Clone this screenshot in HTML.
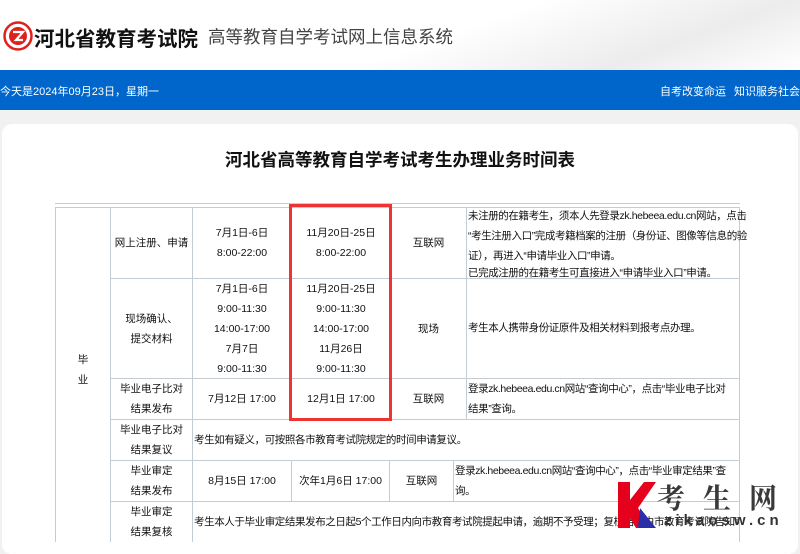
<!DOCTYPE html>
<html><head><meta charset="utf-8">
<style>
*{margin:0;padding:0;box-sizing:border-box}
body{width:800px;height:542px;overflow:hidden;position:relative;background:#f1f1f1;font-family:"Liberation Sans","Noto Sans CJK SC",sans-serif;}
.a{position:absolute;white-space:nowrap}
.hd{left:0;top:0;width:800px;height:70px;background:linear-gradient(160deg,#fff 0%,#fff 55%,#ececec 80%,#fff 100%)}
.bar{left:0;top:70px;width:800px;height:40px;background:#0066cc;color:#fff;font-size:11px}
.card{left:2px;top:124px;width:796px;height:430px;background:#fff;border-radius:10px}
.h{background:#c3ccd2;height:1px}
.v{background:#c3ccd2;width:1px}
.c{position:absolute;font-size:10.5px;color:#111;text-align:center;line-height:20px;display:flex;align-items:center;justify-content:center;flex-direction:column;white-space:nowrap}
.l{position:absolute;font-size:10.5px;color:#111;line-height:20px;white-space:nowrap;letter-spacing:-0.4px}
</style></head><body>
<div class="a hd"></div>
<svg class="a" style="left:3px;top:21px" width="30" height="30" viewBox="0 0 30 30"><circle cx="15" cy="15" r="13.5" fill="none" stroke="#e0201b" stroke-width="2.5"/><circle cx="15" cy="15" r="9" fill="#e0201b"/><path d="M10 11h10l-7 8h7" stroke="#fff" stroke-width="2.2" fill="none"/></svg>
<div class="a" style="left:34px;top:22px;font-size:20.5px;font-weight:bold;color:#111">河北省教育考试院</div>
<div class="a" style="left:208px;top:24px;font-size:17.5px;color:#444">高等教育自学考试网上信息系统</div>
<div class="a bar"><span class="a" style="left:0;top:13px">今天是2024年09月23日，星期一</span><span class="a" style="left:660px;top:13px">自考改变命运</span><span class="a" style="left:734px;top:13px">知识服务社会</span></div>
<div class="a card"></div>
<div class="a" style="left:0;width:800px;top:147px;text-align:center;font-size:17.5px;font-weight:bold;color:#111">河北省高等教育自学考试考生办理业务时间表</div>

<div class="a h" style="left:55px;top:203px;width:685px;background:#ccc"></div>
<div class="a h" style="left:55px;top:207px;width:685px"></div>
<div class="a v" style="left:55px;top:207px;height:335px"></div>
<div class="a v" style="left:110px;top:207px;height:335px"></div>
<div class="a v" style="left:192px;top:207px;height:335px"></div>
<div class="a v" style="left:739px;top:207px;height:335px"></div>
<div class="a v" style="left:291px;top:207px;height:213px"></div>
<div class="a v" style="left:390px;top:207px;height:213px"></div>
<div class="a v" style="left:466px;top:207px;height:213px"></div>
<div class="a v" style="left:291px;top:460px;height:41px"></div>
<div class="a v" style="left:389px;top:460px;height:41px"></div>
<div class="a v" style="left:453px;top:460px;height:41px"></div>
<div class="a h" style="left:110px;top:278px;width:630px"></div>
<div class="a h" style="left:110px;top:378px;width:630px"></div>
<div class="a h" style="left:110px;top:419px;width:630px"></div>
<div class="a h" style="left:110px;top:460px;width:630px"></div>
<div class="a h" style="left:110px;top:501px;width:630px"></div>

<div class="c" style="left:56px;top:350px;width:54px;line-height:20px">毕<br>业</div>
<div class="c" style="left:111px;top:208px;width:81px;height:70px">网上注册、申请</div>
<div class="c" style="left:193px;top:208px;width:98px;height:70px">7月1日-6日<br>8:00-22:00</div>
<div class="c" style="left:292px;top:208px;width:98px;height:70px">11月20日-25日<br>8:00-22:00</div>
<div class="c" style="left:391px;top:208px;width:75px;height:70px">互联网</div>
<div class="l" style="left:468px;top:206px">未注册的在籍考生，须本人先登录zk.hebeea.edu.cn网站，点击<br>“考生注册入口”完成考籍档案的注册（身份证、图像等信息的验<br>证），再进入“申请毕业入口”申请。<div style="line-height:14px">已完成注册的在籍考生可直接进入“申请毕业入口”申请。</div></div>

<div class="c" style="left:111px;top:279px;width:81px;height:99px">现场确认、<br>提交材料</div>
<div class="c" style="left:193px;top:279px;width:98px;height:99px">7月1日-6日<br>9:00-11:30<br>14:00-17:00<br>7月7日<br>9:00-11:30</div>
<div class="c" style="left:292px;top:279px;width:98px;height:99px">11月20日-25日<br>9:00-11:30<br>14:00-17:00<br>11月26日<br>9:00-11:30</div>
<div class="c" style="left:391px;top:279px;width:75px;height:99px">现场</div>
<div class="l" style="left:468px;top:318px">考生本人携带身份证原件及相关材料到报考点办理。</div>

<div class="c" style="left:111px;top:379px;width:81px;height:40px">毕业电子比对<br>结果发布</div>
<div class="c" style="left:193px;top:379px;width:98px;height:40px">7月12日 17:00</div>
<div class="c" style="left:292px;top:379px;width:98px;height:40px">12月1日 17:00</div>
<div class="c" style="left:391px;top:379px;width:75px;height:40px">互联网</div>
<div class="l" style="left:468px;top:379px">登录zk.hebeea.edu.cn网站“查询中心”，点击“毕业电子比对<br>结果”查询。</div>

<div class="c" style="left:111px;top:420px;width:81px;height:40px">毕业电子比对<br>结果复议</div>
<div class="l" style="left:194px;top:430px">考生如有疑义，可按照各市教育考试院规定的时间申请复议。</div>

<div class="c" style="left:111px;top:461px;width:81px;height:40px">毕业审定<br>结果发布</div>
<div class="c" style="left:193px;top:461px;width:98px;height:40px">8月15日 17:00</div>
<div class="c" style="left:292px;top:461px;width:97px;height:40px">次年1月6日 17:00</div>
<div class="c" style="left:390px;top:461px;width:63px;height:40px">互联网</div>
<div class="l" style="left:455px;top:461px">登录zk.hebeea.edu.cn网站“查询中心”，点击“毕业审定结果”查<br>询。</div>

<div class="c" style="left:111px;top:502px;width:81px;height:40px">毕业审定<br>结果复核</div>
<div class="l" style="left:194px;top:512px;width:545px;overflow:hidden">考生本人于毕业审定结果发布之日起5个工作日内向市教育考试院提起申请，逾期不予受理；复核结果由市教育考试院告知考生。</div>

<div class="a" style="left:289px;top:204px;width:103px;height:217px;border:3px solid #ee3333"></div>

<svg class="a" style="left:616px;top:482px" width="42" height="48" viewBox="0 0 42 48"><polygon points="2,0 14,0 14,18 28,0 40,0 22,26 34,46 20,46 14,36 14,46 2,46" fill="#e5001c"/><polygon points="24,26 40,46 22,46" fill="#2a2fa8"/></svg>
<div class="a" style="left:657px;top:477px;font-size:28px;font-weight:bold;color:#3a3a3a;letter-spacing:18px;font-family:'Noto Serif CJK SC','Noto Sans CJK SC',serif">考生网</div>
<div class="a" style="left:664px;top:512px;font-size:15px;font-weight:bold;color:#333;letter-spacing:4px">zikaosw.cn</div>
</body></html>
